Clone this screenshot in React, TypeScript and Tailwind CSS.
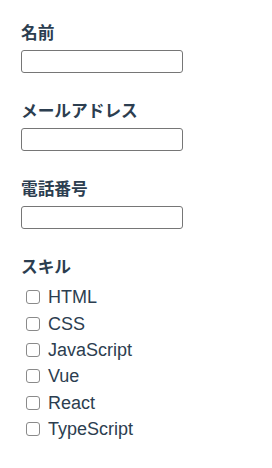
import React from "react";

const skills = ["HTML", "CSS", "JavaScript", "Vue", "React", "TypeScript"];

function Field({ label }: { label: string }) {
  return (
    <div className="flex flex-col mb-[25px]">
      <div className="h-[25px] leading-[25px] text-[16.7px] font-bold text-[#2c3e50] [font-family:'Noto_Sans_CJK_JP',sans-serif]">
        {label}
      </div>
      <input
        type="text"
        className="mt-[5px] h-[23px] w-[162px] border border-[#767676] rounded-[3px] bg-white outline-none"
      />
    </div>
  );
}

export default function App() {
  return (
    <div className="min-h-[468px] w-[272px] bg-white pt-[20px] pl-[21px]">
      <Field label="名前" />
      <Field label="メールアドレス" />
      <Field label="電話番号" />
      <div className="flex flex-col">
        <div className="h-[25px] leading-[25px] text-[16.7px] font-bold text-[#2c3e50] [font-family:'Noto_Sans_CJK_JP',sans-serif]">
          スキル
        </div>
        <div className="mt-[5px] flex flex-col">
          {skills.map((s) => (
            <label key={s} className="flex items-center h-[26.4px]">
              <span className="ml-[5px] mr-[8px] w-[14px] h-[14px] border border-[#8a8a8a] rounded-[3px] bg-white shrink-0" />
              <span className="text-[18px] leading-[26px] text-[#2c3e50] [font-family:'Liberation_Sans',Arial,sans-serif]">
                {s}
              </span>
            </label>
          ))}
        </div>
      </div>
    </div>
  );
}
